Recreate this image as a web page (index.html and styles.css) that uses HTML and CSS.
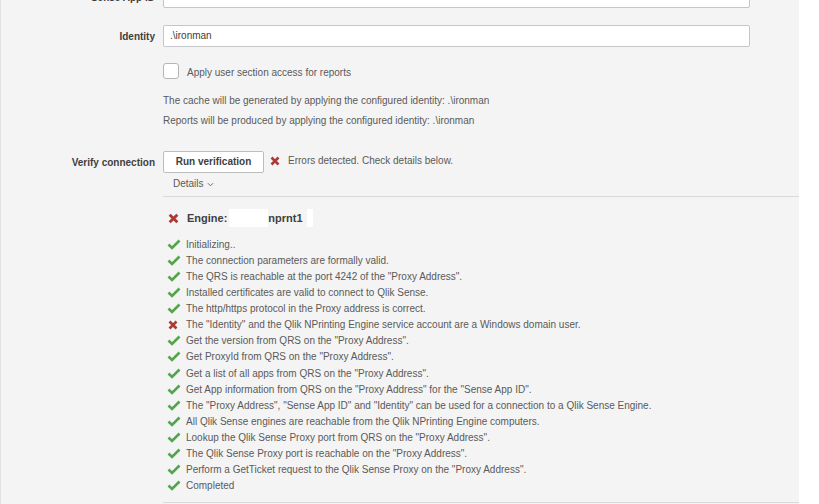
FILE: index.html
```html
<!DOCTYPE html>
<html>
<head>
<meta charset="utf-8">
<link rel="stylesheet" href="styles.css">
</head>
<body>
<div class="panel">
  <div class="form">
    <div class="row">
      <div class="label">Sense App ID</div>
      <div class="input">7c3a5e98-5494-4a5d-9e7f-8f2c3eb4a6d7</div>
    </div>
    <div class="row row-identity">
      <div class="label">Identity</div>
      <div class="input">.\ironman</div>
    </div>
    <div class="row row-check">
      <div class="label"></div>
      <div class="checkbox"></div>
      <div class="check-text">Apply user section access for reports</div>
    </div>
    <div class="notes">
      <div class="note">The cache will be generated by applying the configured identity: .\ironman</div>
      <div class="note">Reports will be produced by applying the configured identity: .\ironman</div>
    </div>
    <div class="row row-verify">
      <div class="label">Verify connection</div>
      <div class="button">Run verification</div>
      <svg class="xicon status-x" viewBox="0 0 10 10" width="10" height="10"><path d="M1.5 1.5 L8.5 8.5 M8.5 1.5 L1.5 8.5"/></svg>
      <div class="status">Errors detected. Check details below.</div>
    </div>
    <div class="details-toggle">Details <svg class="chev" viewBox="0 0 8 5" width="7" height="5"><path d="M1 1 L4 4 L7 1"/></svg></div>
  </div>
  <div class="details">
    <div class="engine">
      <svg class="xicon" viewBox="0 0 10 10" width="11" height="11"><path d="M1.5 1.5 L8.5 8.5 M8.5 1.5 L1.5 8.5"/></svg>
      <span>Engine:</span><span class="redact r1"></span><span>nprnt1</span><span class="redact r2"></span>
    </div>
    <ul class="steps">
      <li><svg class="ok" viewBox="0 0 14 11" width="14" height="11"><path d="M1.5 5.5 L5 9 L12.5 1.5"/></svg>Initializing..</li>
      <li><svg class="ok" viewBox="0 0 14 11" width="14" height="11"><path d="M1.5 5.5 L5 9 L12.5 1.5"/></svg>The connection parameters are formally valid.</li>
      <li><svg class="ok" viewBox="0 0 14 11" width="14" height="11"><path d="M1.5 5.5 L5 9 L12.5 1.5"/></svg>The QRS is reachable at the port 4242 of the "Proxy Address".</li>
      <li><svg class="ok" viewBox="0 0 14 11" width="14" height="11"><path d="M1.5 5.5 L5 9 L12.5 1.5"/></svg>Installed certificates are valid to connect to Qlik Sense.</li>
      <li><svg class="ok" viewBox="0 0 14 11" width="14" height="11"><path d="M1.5 5.5 L5 9 L12.5 1.5"/></svg>The http/https protocol in the Proxy address is correct.</li>
      <li><svg class="xicon step-x" viewBox="0 0 10 10" width="10" height="10"><path d="M1.5 1.5 L8.5 8.5 M8.5 1.5 L1.5 8.5"/></svg>The "Identity" and the Qlik NPrinting Engine service account are a Windows domain user.</li>
      <li><svg class="ok" viewBox="0 0 14 11" width="14" height="11"><path d="M1.5 5.5 L5 9 L12.5 1.5"/></svg>Get the version from QRS on the "Proxy Address".</li>
      <li><svg class="ok" viewBox="0 0 14 11" width="14" height="11"><path d="M1.5 5.5 L5 9 L12.5 1.5"/></svg>Get ProxyId from QRS on the "Proxy Address".</li>
      <li><svg class="ok" viewBox="0 0 14 11" width="14" height="11"><path d="M1.5 5.5 L5 9 L12.5 1.5"/></svg>Get a list of all apps from QRS on the "Proxy Address".</li>
      <li><svg class="ok" viewBox="0 0 14 11" width="14" height="11"><path d="M1.5 5.5 L5 9 L12.5 1.5"/></svg>Get App information from QRS on the "Proxy Address" for the "Sense App ID".</li>
      <li><svg class="ok" viewBox="0 0 14 11" width="14" height="11"><path d="M1.5 5.5 L5 9 L12.5 1.5"/></svg>The "Proxy Address", "Sense App ID" and "Identity" can be used for a connection to a Qlik Sense Engine.</li>
      <li><svg class="ok" viewBox="0 0 14 11" width="14" height="11"><path d="M1.5 5.5 L5 9 L12.5 1.5"/></svg>All Qlik Sense engines are reachable from the Qlik NPrinting Engine computers.</li>
      <li><svg class="ok" viewBox="0 0 14 11" width="14" height="11"><path d="M1.5 5.5 L5 9 L12.5 1.5"/></svg>Lookup the Qlik Sense Proxy port from QRS on the "Proxy Address".</li>
      <li><svg class="ok" viewBox="0 0 14 11" width="14" height="11"><path d="M1.5 5.5 L5 9 L12.5 1.5"/></svg>The Qlik Sense Proxy port is reachable on the "Proxy Address".</li>
      <li><svg class="ok" viewBox="0 0 14 11" width="14" height="11"><path d="M1.5 5.5 L5 9 L12.5 1.5"/></svg>Perform a GetTicket request to the Qlik Sense Proxy on the "Proxy Address".</li>
      <li><svg class="ok" viewBox="0 0 14 11" width="14" height="11"><path d="M1.5 5.5 L5 9 L12.5 1.5"/></svg>Completed</li>
    </ul>
  </div>
</div>
</body>
</html>
```

FILE: styles.css
```css
html, body {
  margin: 0;
  padding: 0;
  background: #ffffff;
  height: 100%;
  overflow: hidden;
}
body {
  font-family: "Liberation Sans", Arial, sans-serif;
  font-size: 10px;
  color: #5a5a5a;
}
.panel {
  width: 798px;
  height: 504px;
  background: #f4f4f4;
  border-left: 1px solid #e2e2e2;
  overflow: hidden;
}
.form {
  margin-top: -14px;
}
.row {
  display: flex;
  align-items: center;
}
.label {
  width: 154px;
  margin-right: 8px;
  text-align: right;
  font-weight: bold;
  color: #404040;
  flex: none;
}
.input {
  box-sizing: border-box;
  width: 587px;
  height: 22px;
  line-height: 20px;
  padding-left: 6px;
  background: #ffffff;
  border: 1px solid #c6c6c6;
  border-radius: 2px;
  color: #404040;
}
.row-identity {
  margin-top: 17px;
}
.row-check {
  margin-top: 16px;
}
.checkbox {
  box-sizing: border-box;
  width: 16px;
  height: 16px;
  background: #ffffff;
  border: 1px solid #b5b5b5;
  border-radius: 3px;
  margin-right: 8px;
}
.check-text {
  padding-top: 2px;
}
.notes {
  margin-top: 12px;
  padding-left: 162px;
}
.note {
  line-height: 20px;
}
.row-verify {
  margin-top: 20px;
}
.button {
  box-sizing: border-box;
  width: 101px;
  height: 22px;
  line-height: 20px;
  text-align: center;
  background: #ffffff;
  border: 1px solid #bdbdbd;
  border-radius: 2px;
  font-weight: bold;
  color: #404040;
}
.xicon path {
  fill: none;
  stroke: #a93a36;
  stroke-width: 2.6;
}
.status-x {
  margin-left: 6px;
  margin-right: 8px;
  margin-top: -2px;
}
.status {
  margin-top: -3px;
}
.details-toggle {
  margin-top: 4px;
  padding-left: 172px;
  line-height: 14px;
  display: flex;
  align-items: center;
  gap: 3px;
}
.chev path {
  fill: none;
  stroke: #595959;
  stroke-width: 1;
}
.details {
  margin-top: 5px;
  margin-left: 162px;
  border-top: 1px solid #d9d9d9;
  border-bottom: 1px solid #d9d9d9;
  padding-top: 13px;
  padding-bottom: 8px;
}
.engine {
  display: flex;
  align-items: center;
  height: 16px;
  font-size: 11px;
  font-weight: bold;
  color: #404040;
  padding-left: 5px;
}
.engine .xicon {
  margin-right: 8px;
}
.redact {
  display: inline-block;
  background: #ffffff;
  height: 18px;
  flex: none;
}
.r1 {
  width: 39px;
  margin-left: 2px;
}
.r2 {
  width: 6px;
  margin-left: 4px;
}
.steps {
  list-style: none;
  margin: 10px 0 0 0;
  padding: 0 0 0 4px;
}
.steps li {
  display: flex;
  align-items: center;
  height: 16.13px;
}
.ok {
  margin-right: 5px;
  flex: none;
}
.ok path {
  fill: none;
  stroke: #52a54d;
  stroke-width: 2.6;
}
.step-x {
  margin-left: 1px;
  margin-right: 8px;
  flex: none;
}
```
